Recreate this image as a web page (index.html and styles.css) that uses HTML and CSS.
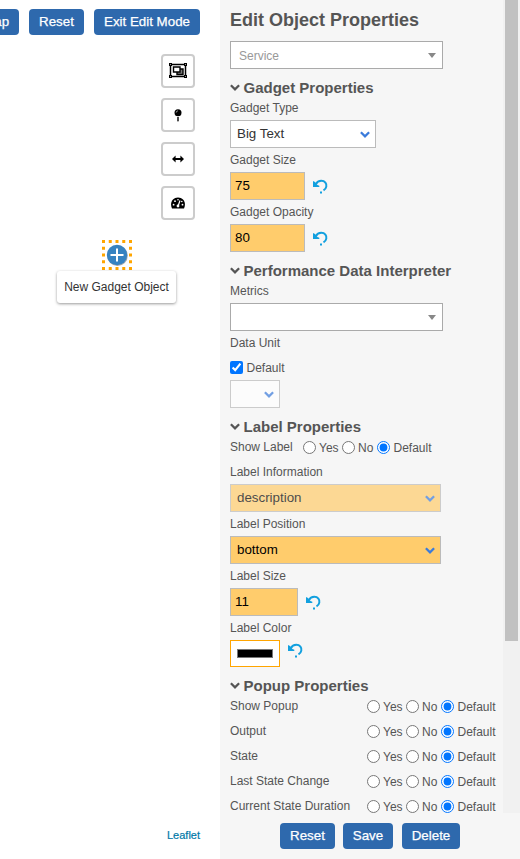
FILE: index.html
```html
<!DOCTYPE html>
<html lang="en">
<head>
<meta charset="utf-8">
<title>Edit Object Properties</title>
<link rel="stylesheet" href="styles.css">
</head>
<body>
<svg class="defs" width="0" height="0">
  <symbol id="chev" viewBox="0 0 10 8"><path d="M.9 1.300 5 5.300 9.100 1.300" fill="none" stroke="currentColor" stroke-width="2.300"/></symbol>
  <symbol id="undo" viewBox="0 0 16 16"><path d="M1 3v6h6.300V7.700L5.400 7 3 4z" fill="currentColor"/><path d="M3.800 6.200C5.200 3.400 7.300 2.800 9.300 2.800c3.700 0 5.600 2.900 5 5.800-.3 1.700-1.200 2.800-2.800 3.700" fill="none" stroke="currentColor" stroke-width="2"/><path d="M8 13.500h2v2H8z" fill="currentColor"/></symbol>
</svg>
<main class="app">
  <section class="map">
    <nav class="topbar">
      <button class="btn map-btn">Add Map</button>
      <button class="btn reset">Reset</button>
      <button class="btn exit">Exit Edit Mode</button>
    </nav>
    <div class="tools">
      <button class="tool"><svg width="18" height="16" viewBox="0 0 18 16"><path d="M1.500 1.500h15v12h-15z" fill="#fff" stroke="#000" stroke-width="1.500"/><path d="M8 6h6v5.500H8z" fill="#777" stroke="#000" stroke-width="1.400"/><path d="M4.500 4h6.500v5H4.500z" fill="#fff" stroke="#000" stroke-width="1.400"/><path d="M0 0h3v3H0zM15 0h3v3h-3zM0 12h3v3H0zM15 12h3v3h-3z"/><path d="M1 1h1v1H1zM16 1h1v1h-1zM1 13h1v1H1zM16 13h1v1h-1z" fill="#999"/></svg></button>
      <button class="tool"><svg width="8" height="13" viewBox="0 0 8 13"><circle cx="4" cy="3.700" r="3.500"/><path d="M3.300 8h1.400v3.500L4 13l-.7-1.500z"/><path d="M2.200 3.600Q2.300 2 3.900 1.800" fill="none" stroke="#fff" stroke-width=".6"/></svg></button>
      <button class="tool"><svg width="12" height="8" viewBox="0 0 12 8"><path d="M0 4 3.600.6V3h4.800V.6L12 4 8.400 7.400V5H3.600v2.400z"/></svg></button>
      <button class="tool"><svg width="14" height="12" viewBox="0 0 14 12"><path d="M1 11.500C-1.600 6 1.500.5 7 .5s8.600 5.500 6 11z"/><g fill="#fff"><circle cx="2.600" cy="7.700" r=".9"/><circle cx="4" cy="4.200" r=".9"/><circle cx="7" cy="2.700" r=".8"/><circle cx="10.800" cy="4.500" r=".8"/><circle cx="11.500" cy="7.700" r=".9"/></g><path d="M9 3.500 7.200 8.700" stroke="#fff" stroke-width="1.200"/><circle cx="7" cy="9" r="1.400" fill="#fff"/></svg></button>
    </div>
    <div class="marker">
      <svg width="30" height="30" viewBox="0 0 30 30"><path d="M0 1.500h30M0 28.500h30M1.500 0v30M28.500 0v30" stroke="orange" stroke-width="3" stroke-dasharray="3 3.750"/><circle cx="15.500" cy="15.700" r="10.300" fill="#aaa"/><circle cx="15" cy="15" r="10.200" fill="#3783c1"/><path d="M15 8.500v13M8.500 15h13" stroke="#fff" stroke-width="2"/></svg>
      <div class="tip">New Gadget Object</div>
    </div>
    <a class="leaflet">Leaflet</a>
  </section>
  <aside class="panel">
    <div class="body">
      <form class="form">
        <h1>Edit Object Properties</h1>
        <div class="combo"><span>Service</span><i class="tri"></i></div>
        <h2><svg class="hc"><use href="#chev"/></svg>Gadget Properties</h2>
        <label>Gadget Type</label>
        <div class="sel type"><span>Big Text</span><svg class="sc"><use href="#chev"/></svg></div>
        <label>Gadget Size</label>
        <div class="line"><div class="num">75</div><svg class="undo"><use href="#undo"/></svg></div>
        <label>Gadget Opacity</label>
        <div class="line"><div class="num">80</div><svg class="undo"><use href="#undo"/></svg></div>
        <h2><svg class="hc"><use href="#chev"/></svg>Performance Data Interpreter</h2>
        <label>Metrics</label>
        <div class="combo"><span></span><i class="tri"></i></div>
        <label>Data Unit</label>
        <div class="check"><input type="checkbox" checked><span>Default</span></div>
        <div class="sel unit disabled"><span></span><svg class="sc"><use href="#chev"/></svg></div>
        <h2><svg class="hc"><use href="#chev"/></svg>Label Properties</h2>
        <div class="row short"><b>Show Label</b><input type="radio" name="a"><span class="yes">Yes</span><input type="radio" name="a"><span class="no">No</span><input type="radio" name="a" checked><span>Default</span></div>
        <label>Label Information</label>
        <div class="sel wide amber disabled"><span>description</span><svg class="sc"><use href="#chev"/></svg></div>
        <label>Label Position</label>
        <div class="sel wide amber"><span>bottom</span><svg class="sc"><use href="#chev"/></svg></div>
        <label>Label Size</label>
        <div class="line"><div class="num small">11</div><svg class="undo"><use href="#undo"/></svg></div>
        <label>Label Color</label>
        <div class="line color-line"><div class="color"><i></i></div><svg class="undo"><use href="#undo"/></svg></div>
        <h2><svg class="hc"><use href="#chev"/></svg>Popup Properties</h2>
        <div class="row"><b>Show Popup</b><input type="radio" name="b"><span class="yes">Yes</span><input type="radio" name="b"><span class="no">No</span><input type="radio" name="b" checked><span>Default</span></div>
        <div class="row"><b>Output</b><input type="radio" name="c"><span class="yes">Yes</span><input type="radio" name="c"><span class="no">No</span><input type="radio" name="c" checked><span>Default</span></div>
        <div class="row"><b>State</b><input type="radio" name="d"><span class="yes">Yes</span><input type="radio" name="d"><span class="no">No</span><input type="radio" name="d" checked><span>Default</span></div>
        <div class="row"><b>Last State Change</b><input type="radio" name="e"><span class="yes">Yes</span><input type="radio" name="e"><span class="no">No</span><input type="radio" name="e" checked><span>Default</span></div>
        <div class="row"><b>Current State Duration</b><input type="radio" name="f"><span class="yes">Yes</span><input type="radio" name="f"><span class="no">No</span><input type="radio" name="f" checked><span>Default</span></div>
      </form>
      <div class="track"><div class="thumb"></div></div>
    </div>
    <footer><button class="btn f1">Reset</button><button class="btn f2">Save</button><button class="btn f3">Delete</button></footer>
  </aside>
</main>
</body>
</html>
```

FILE: styles.css
```css
* { box-sizing: border-box; }
body { margin: 0; font: 12px "Liberation Sans", Arial, sans-serif; color: #555; background: #fff; }
.defs { display: block; }
svg { display: block; flex: none; }
.app { display: flex; height: 859px; overflow: hidden; }
.map { width: 220px; flex: none; display: flex; flex-direction: column; overflow: hidden; }
.btn { height: 26px; border: 0; border-radius: 4px; background: #2e69ad; color: #fff; padding: 0 0 1px; font: 13.33px "Liberation Sans", Arial, sans-serif; -webkit-text-stroke: .25px #fff; flex: none; white-space: nowrap; }
.topbar { display: flex; justify-content: flex-end; gap: 10px; padding: 9px 20px 0 0; height: 54px; }
.map-btn { width: 73px; }
.reset, .f1 { width: 55px; }
.exit { width: 106px; }
.tools { display: flex; flex-direction: column; align-items: flex-end; gap: 10px; padding-right: 25px; }
.tool { width: 34px; height: 34px; padding: 0; border: 2px solid #ccc; border-radius: 4px; background: #fff; display: flex; align-items: center; justify-content: center; }
.marker { display: flex; flex-direction: column; align-items: center; width: 120px; margin: 20px 0 0 57px; }
.tip { width: 119px; height: 32px; margin: 1px 1px 0 0; background: #fff; border-radius: 3px; box-shadow: 0 1px 3px rgba(0,0,0,.4); color: #333; line-height: 32px; text-align: center; white-space: nowrap; }
.leaflet { margin: auto 20px 17px auto; font-size: 11px; line-height: 14px; color: #0078a8; -webkit-text-stroke: .2px #0078a8; }
.panel { width: 300px; flex: none; background: #f6f6f6; }
.body { display: flex; height: 813px; overflow: hidden; }
.form { width: 283px; flex: none; padding-left: 10px; }
.track { width: 17px; background: #f1f1f1; padding: 0 2px; }
.thumb { height: 641px; background: #c1c1c1; }
h1 { margin: 0; height: 41px; font-size: 18px; line-height: 40px; }
h2 { margin: 0; height: 27px; padding-top: 11px; display: flex; font-size: 15px; line-height: 16px; }
.hc { width: 10px; height: 8px; margin: 4px 3.500px 0 0; }
label { display: block; height: 24px; line-height: 24px; }
.combo { width: 213px; height: 28px; border: 1px solid #aaa; background: #fff; color: #999; display: flex; align-items: center; justify-content: space-between; padding: 1px 6px 0 8px; }
.tri { border: 4px solid transparent; border-top: 5px solid #888; border-bottom: 0; }
.sel { height: 28px; border: 1px solid #bbb; background: #fff; color: #333; display: flex; align-items: center; justify-content: space-between; padding: 0 5px 1px 6px; font-size: 13.33px; }
.sc { width: 10px; height: 8px; color: #3b7bdb; margin-top: 2px; }
.type { width: 146px; }
.unit { width: 50px; }
.wide { width: 211px; }
.amber { background: #ffcc6c; color: #000; }
.disabled { opacity: .7; }
.line { display: flex; height: 28px; }
.num { width: 75px; border: 1px solid #bbb; background: #ffcc6c; color: #000; font-size: 13.33px; line-height: 25px; padding-left: 4px; }
.num.small { width: 68px; }
.undo { width: 16px; height: 16px; margin: 6px 0 0 7px; color: #12a0df; }
.color-line { height: 27px; }
.color { width: 50px; border: 1px solid orange; background: #fff; padding: 8px 6px; }
.color i { display: block; height: 9px; background: #000; border: 1px solid #777; }
.color-line .undo { margin-top: 2px; }
.check, .row { display: flex; align-items: center; height: 25px; }
input { width: 13px; height: 13px; margin: 0; flex: none; accent-color: #0075ff; }
.check span { margin-left: 3.500px; }
.row b { width: 137px; font-weight: normal; padding-bottom: 2px; }
.row.short b { width: 73px; }
.row span { margin-left: 3px; }
.row .yes { width: 23px; }
.row .no { width: 19px; }
.row .no + input + span { margin-left: 3.500px; }
footer { display: flex; padding: 10px 0 0 60px; }
.f2 { width: 50px; margin-left: 8px; }
.f3 { width: 58px; margin-left: 9px; }
```
